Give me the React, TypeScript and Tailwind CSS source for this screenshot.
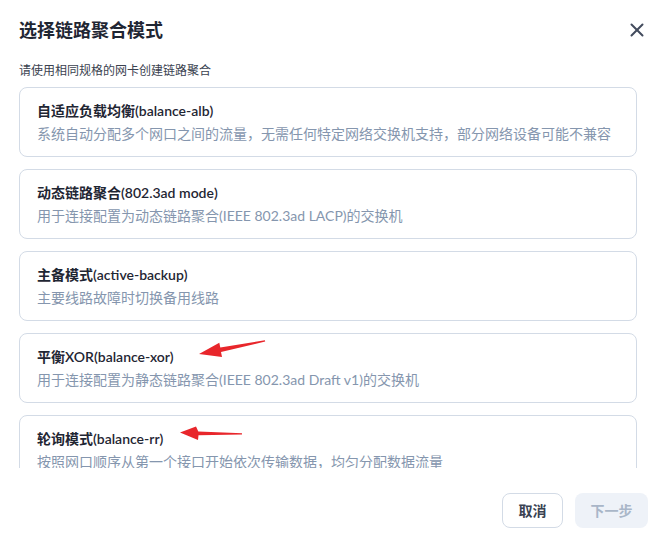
import { X } from 'lucide-react'

const modes = [
  {
    title: '自适应负载均衡(balance-alb)',
    desc: '系统自动分配多个网口之间的流量，无需任何特定网络交换机支持，部分网络设备可能不兼容',
  },
  {
    title: '动态链路聚合(802.3ad mode)',
    desc: '用于连接配置为动态链路聚合(IEEE 802.3ad LACP)的交换机',
  },
  {
    title: '主备模式(active-backup)',
    desc: '主要线路故障时切换备用线路',
  },
  {
    title: '平衡XOR(balance-xor)',
    desc: '用于连接配置为静态链路聚合(IEEE 802.3ad Draft v1)的交换机',
  },
  {
    title: '轮询模式(balance-rr)',
    desc: '按照网口顺序从第一个接口开始依次传输数据，均匀分配数据流量',
  },
]

export default function App() {
  return (
    <div
      className="relative flex flex-col w-[666px] h-[537px] bg-white overflow-hidden"
      style={{ fontFamily: 'Lato, "Noto Sans CJK SC", sans-serif' }}
    >
      <div className="flex items-center justify-between pl-[19px] pr-[18px] pt-[18px]">
        <h1 className="text-[18px] leading-[24px] font-bold text-[#1f2633]">选择链路聚合模式</h1>
        <button className="text-[#434c5e]">
          <X size={22} strokeWidth={2.2} />
        </button>
      </div>

      <div className="mt-[20px] h-[406px] overflow-hidden pl-[19px] pr-[29px]">
        <p className="text-[12px] leading-[18px] text-[#3b4250] mb-[7px]">请使用相同规格的网卡创建链路聚合</p>
        <div className="flex flex-col gap-3">
          {modes.map((m) => (
            <div key={m.title} className="border border-[#d3dbe6] rounded-lg px-[17px] py-[11px]">
              <div className="text-[14px] leading-[23px] font-semibold text-[#1f2633]">{m.title}</div>
              <div className="text-[14px] leading-[23px] text-[#8596ae]">{m.desc}</div>
            </div>
          ))}
        </div>
      </div>

      <div className="flex justify-end gap-3 pt-[25px] pr-[18px]">
        <button className="w-[61px] h-[35px] border border-[#d3dbe6] rounded-lg text-[14px] font-semibold text-[#3a4252]">
          取消
        </button>
        <button className="w-[73px] h-[35px] rounded-lg bg-[#eef2f8] text-[14px] font-semibold text-[#a9b6c8]">
          下一步
        </button>
      </div>

      {/* annotation arrows */}
      <svg className="absolute inset-0 pointer-events-none" width="666" height="537">
        <polygon
          fill="#e8262b"
          points="199,354 222,357 221,351.9 265.2,341.6 264.9,340.3 220.3,347.5 219.3,342.8"
        />
        <polygon
          fill="#e8262b"
          points="180,432.5 198,440 198.5,435.3 242,434.6 242,433.2 198.3,431.4 196,426.5"
        />
      </svg>
    </div>
  )
}
